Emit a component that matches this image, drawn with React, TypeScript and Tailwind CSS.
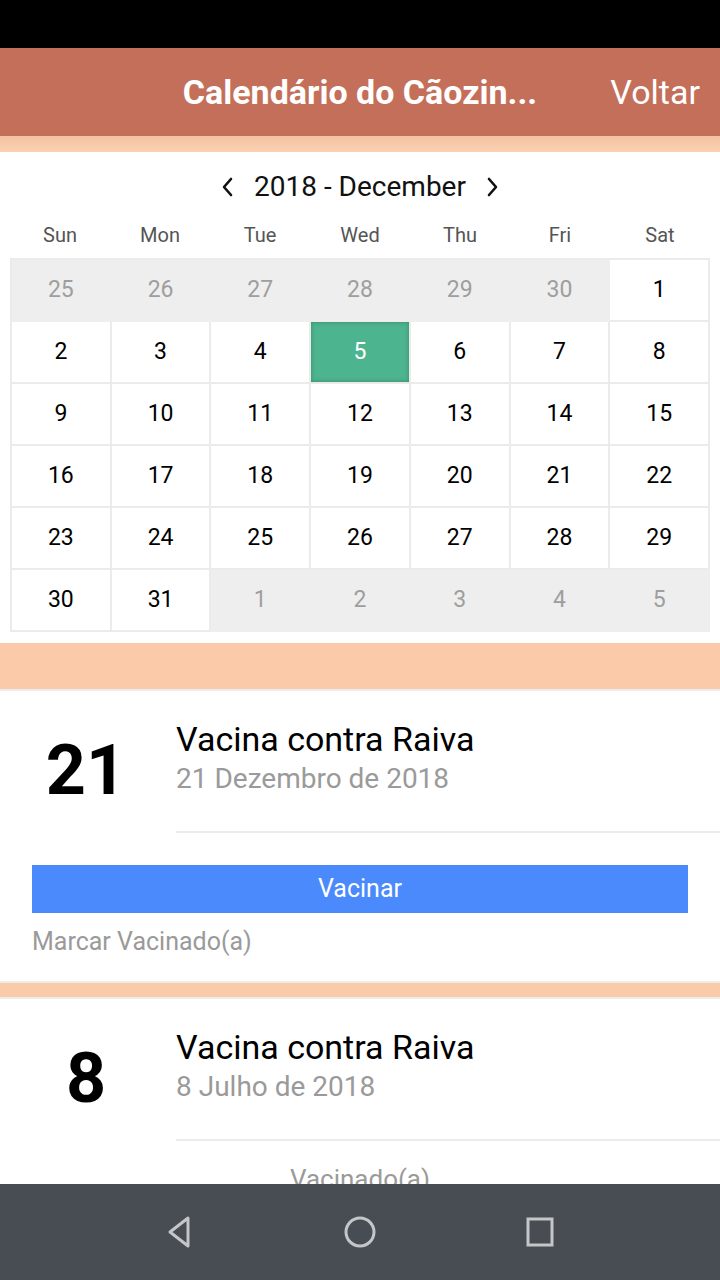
import React from 'react';

type Day = { n: number; other?: boolean; selected?: boolean };

const weekdays = ['Sun', 'Mon', 'Tue', 'Wed', 'Thu', 'Fri', 'Sat'];

const buildWeeks = (): Day[][] => {
  const days: Day[] = [];
  [25, 26, 27, 28, 29, 30].forEach((n) => days.push({ n, other: true }));
  for (let n = 1; n <= 31; n++) days.push({ n, selected: n === 5 });
  [1, 2, 3, 4, 5].forEach((n) => days.push({ n, other: true }));
  const weeks: Day[][] = [];
  for (let i = 0; i < days.length; i += 7) weeks.push(days.slice(i, i + 7));
  return weeks;
};

const Chevron: React.FC<{ dir: 'left' | 'right' }> = ({ dir }) => (
  <svg width="16" height="24" viewBox="0 0 16 24" fill="none" stroke="#111" strokeWidth="2.6" strokeLinecap="round" strokeLinejoin="round">
    {dir === 'left' ? <path d="M11 4 L4 12 L11 20" /> : <path d="M5 4 L12 12 L5 20" />}
  </svg>
);

interface VaccineCardProps {
  day: string;
  date: string;
  children: React.ReactNode;
}

const VaccineCard: React.FC<VaccineCardProps> = ({ day, date, children }) => (
  <div className="bg-white">
    <div className="flex h-[142px]">
      <div className="w-[176px] shrink-0 pt-[44px] pr-[4px] text-center">
        <span className="text-[70px] leading-[70px] font-bold text-black">{day}</span>
      </div>
      <div className="flex-1 border-b-2 border-[#ececec] pt-[28px]">
        <p className="text-[34px] leading-[40px] text-black">Vacina contra Raiva</p>
        <p className="mt-[3px] text-[28px] leading-[34px] text-[#9a9a9a]">{date}</p>
      </div>
    </div>
    {children}
  </div>
);

const Separator: React.FC = () => (
  <div className="h-[18px] border-y-2 border-[#ececec] bg-[#fbcba9]" />
);

const App: React.FC = () => {
  const weeks = buildWeeks();

  return (
    <div className="flex h-[1280px] w-[720px] flex-col overflow-hidden bg-white font-['Roboto',sans-serif]">
      <div className="h-[48px] shrink-0 bg-black" />
      <header className="relative flex h-[88px] shrink-0 items-center justify-center bg-[#c46f5a]">
        <h1 className="text-[34px] font-bold text-white">Calendário do Cãozin...</h1>
        <span className="absolute right-[20px] text-[34px] text-white">Voltar</span>
      </header>
      <div className="h-[16px] shrink-0 bg-gradient-to-b from-[#f4c1a1] to-[#fbd2b4]" />

      <main className="flex-1 overflow-hidden">
        <div className="flex h-[68px] items-center justify-center gap-[18px] pt-[2px]">
          <Chevron dir="left" />
          <span className="text-[28px] text-[#111]">2018 - December</span>
          <Chevron dir="right" />
        </div>
        <div className="mx-[10px] grid grid-cols-7">
          {weekdays.map((d) => (
            <div key={d} className="h-[38px] text-center text-[20px] leading-[30px] text-[#555]">
              {d}
            </div>
          ))}
        </div>
        <div className="mx-[10px] border-l-2 border-t-2 border-[#ebebeb]">
          {weeks.map((week, wi) => (
            <div key={wi} className="grid grid-cols-7">
              {week.map((d, di) => (
                <div
                  key={di}
                  className={`flex h-[62px] items-center justify-center border-b-2 border-r-2 text-[23px] ${
                    d.other ? 'border-[#eeeeee] bg-[#eeeeee] text-[#9e9e9e]' : 'border-[#ebebeb] bg-white text-black'
                  }`}
                >
                  {d.selected ? (
                    <div className="flex h-full w-full items-center justify-center bg-[#4cb48f] text-white shadow-[inset_0_0_4px_rgba(0,0,0,0.25)]">
                      {d.n}
                    </div>
                  ) : (
                    d.n
                  )}
                </div>
              ))}
            </div>
          ))}
        </div>

        <div className="mt-[11px] h-[48px] border-b-2 border-[#ececec] bg-[#fbcba9]" />

        <VaccineCard day="21" date="21 Dezembro de 2018">
          <div className="px-[32px] pb-[24px] pt-[32px]">
            <button className="h-[48px] w-full bg-[#4a8afc] text-[25px] text-white">Vacinar</button>
            <p className="mt-[14px] text-[25px] leading-[30px] text-[#9a9a9a]">Marcar Vacinado(a)</p>
          </div>
        </VaccineCard>

        <Separator />

        <VaccineCard day="8" date="8 Julho de 2018">
          <div className="pt-[22px] text-center text-[26px] leading-[32px] text-[#9a9a9a]">Vacinado(a)</div>
        </VaccineCard>
      </main>

      <nav className="flex h-[96px] shrink-0 items-center justify-center gap-[140px] bg-[#474d53]">
        <svg width="40" height="40" viewBox="0 0 40 40" fill="none" stroke="#c4c6c8" strokeWidth="3" strokeLinejoin="round">
          <path d="M28 6 L10 20 L28 34 Z" />
        </svg>
        <svg width="40" height="40" viewBox="0 0 40 40" fill="none" stroke="#c4c6c8" strokeWidth="3">
          <circle cx="20" cy="20" r="14" />
        </svg>
        <svg width="40" height="40" viewBox="0 0 40 40" fill="none" stroke="#c4c6c8" strokeWidth="3">
          <rect x="8" y="7" width="24" height="26" />
        </svg>
      </nav>
    </div>
  );
};

export default App;
